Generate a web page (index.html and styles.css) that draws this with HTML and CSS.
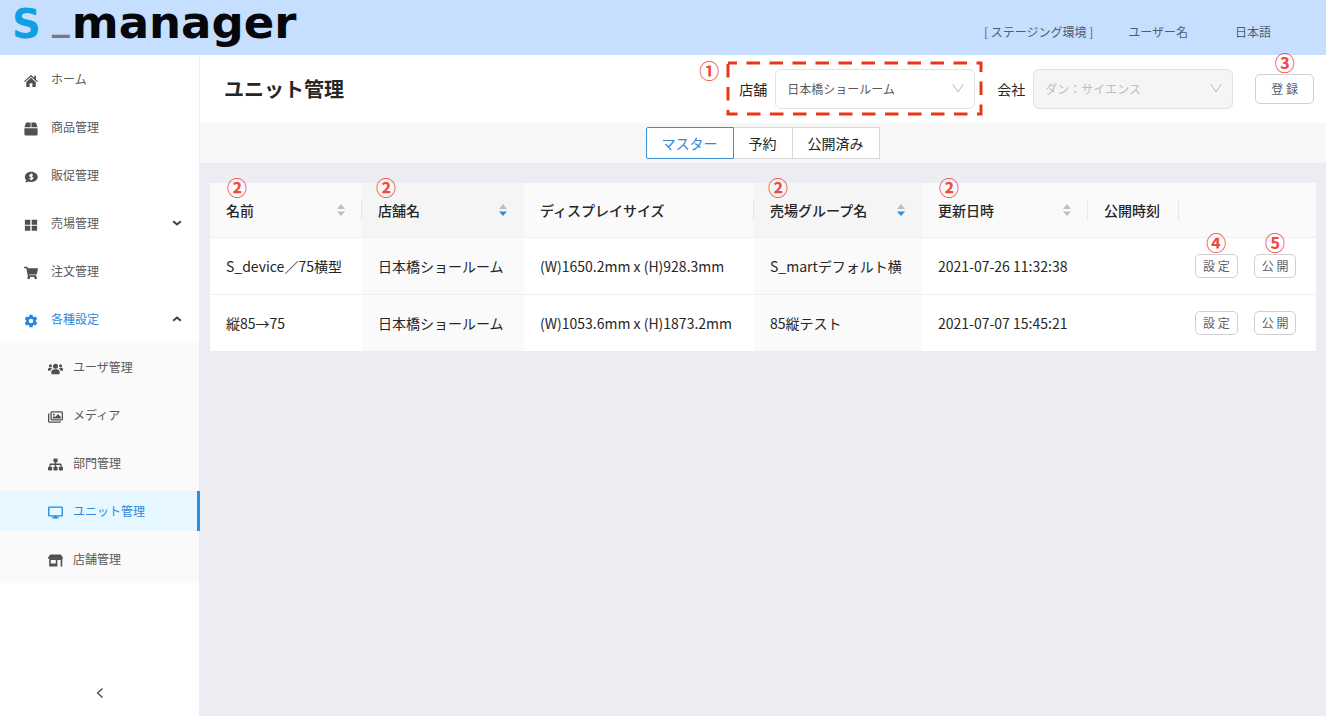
FILE: index.html
```html
<!DOCTYPE html>
<html lang="ja">
<head>
<meta charset="utf-8">
<meta name="viewport" content="width=device-width, initial-scale=1">
<title>ユニット管理</title>
<link rel="stylesheet" href="styles.css">
</head>
<body>
<div class="app">
  <header class="topbar">
    <div class="logo"><span class="logo-s">S</span><span class="logo-bar">_</span><span class="logo-word">manager</span></div>
    <div class="topbar-nav">
      <span>[ ステージング環境 ]</span>
      <button type="button" class="top-btn user-btn">ユーザー名</button>
      <button type="button" class="top-btn">日本語</button>
    </div>
  </header>
  <div class="body">
    <nav class="sidebar">
      <ul class="menu">
        <li><a class="item" href="#"><svg class="icon" viewBox="0 0 16 16"><path d="M8 4.2 2.6 9v5.2c0 .4.3.6.6.6h3.2V10.6h3.2v4.2h3.2c.4 0 .6-.2.6-.6V9z"/><path d="M8 1.2 0 8.2l.9 1L8 3l7.1 6.2.9-1-2.3-2V2h-2v2.400z"/></svg>ホーム</a></li>
        <li><a class="item" href="#"><svg class="icon" viewBox="-16 -16 544 544"><path d="M509.500 184.600L458.900 32.800C452.400 13.200 434.100 0 413.400 0H272v192h238.700c-.4-2.500-.4-5-1.200-7.400zM240 0H98.600c-20.700 0-39 13.200-45.500 32.800L2.500 184.600c-.8 2.400-.8 4.900-1.200 7.400H240V0zM0 224v240c0 26.500 21.500 48 48 48h416c26.500 0 48-21.500 48-48V224H0z"/></svg>商品管理</a></li>
        <li><a class="item" href="#"><svg class="icon" viewBox="0 0 16 16"><path d="M8.300 2C4.200 2 1 4.600 1 7.900c0 1.400.6 2.700 1.600 3.700-.3 1.300-1.300 2.300-1.500 2.500 1.800.1 3.200-.5 4.100-1.100.9.400 2 .6 3.100.6 4.100 0 7.400-2.500 7.400-5.700S12.400 2 8.300 2z"/><path class="cut" d="M10.100 6.100c-.4-.6-1-.8-1.800-.8-1 0-1.700.4-1.700 1.200 0 1.700 3.600.9 3.600 2.700 0 .8-.8 1.300-1.800 1.300-.8 0-1.600-.3-2-.9M8.300 4v7.700"/></svg>販促管理</a></li>
        <li><a class="item" href="#"><svg class="icon" viewBox="0 0 16 16"><path d="M1.500 2h5.700v5.700H1V2.500c0-.3.200-.5.500-.5zM8.800 2h5.700c.3 0 .5.200.5.500v5.200H8.800zM1 8.800h6.200V14.500H1.500c-.3 0-.5-.2-.5-.5zM8.800 8.800H15V14c0 .3-.2.5-.5.5H8.800z"/></svg>売場管理<svg class="caret" viewBox="0 0 10 10"><path d="m1.200 3.200 3.800 3.300 3.800-3.300"/></svg></a></li>
        <li><a class="item" href="#"><svg class="icon" viewBox="0 -32 576 576"><path d="M528.120 301.319l47.273-208C578.806 78.301 567.391 64 551.990 64H159.208l-9.166-44.810C147.758 8.021 137.930 0 126.529 0H24C10.745 0 0 10.745 0 24v16c0 13.255 10.745 24 24 24h69.883l70.248 343.435C147.325 417.100 136 435.222 136 456c0 30.928 25.072 56 56 56s56-25.072 56-56c0-15.674-6.447-29.835-16.824-40h209.647C430.447 426.165 424 440.326 424 456c0 30.928 25.072 56 56 56s56-25.072 56-56c0-22.172-12.888-41.332-31.579-50.405l5.517-24.276c3.413-15.018-8.002-29.319-23.403-29.319H218.117l-6.545-32h293.145c11.206 0 20.920-7.754 23.403-18.681z"/></svg>注文管理</a></li>
        <li>
          <a class="item active" href="#"><svg class="icon" viewBox="1 1 22 22"><path d="M12,15.500A3.500,3.500 0 0,1 8.500,12A3.500,3.500 0 0,1 12,8.500A3.500,3.500 0 0,1 15.500,12A3.500,3.500 0 0,1 12,15.500M19.430,12.970C19.470,12.650 19.500,12.330 19.500,12C19.500,11.670 19.470,11.340 19.430,11L21.540,9.370C21.730,9.220 21.780,8.950 21.660,8.730L19.660,5.270C19.540,5.050 19.270,4.960 19.050,5.050L16.560,6.050C16.040,5.660 15.500,5.320 14.870,5.070L14.500,2.420C14.460,2.180 14.250,2 14,2H10C9.750,2 9.540,2.180 9.500,2.420L9.130,5.070C8.500,5.320 7.960,5.660 7.440,6.050L4.950,5.050C4.730,4.960 4.460,5.050 4.340,5.270L2.340,8.730C2.210,8.950 2.270,9.220 2.460,9.370L4.570,11C4.530,11.340 4.500,11.670 4.500,12C4.500,12.330 4.530,12.650 4.570,12.970L2.460,14.630C2.270,14.780 2.210,15.050 2.340,15.270L4.340,18.730C4.460,18.950 4.730,19.030 4.950,18.950L7.440,17.940C7.960,18.340 8.500,18.680 9.130,18.930L9.500,21.580C9.540,21.820 9.750,22 10,22H14C14.250,22 14.460,21.820 14.500,21.580L14.870,18.930C15.500,18.670 16.040,18.340 16.560,17.940L19.050,18.950C19.270,19.030 19.540,18.950 19.660,18.730L21.660,15.270C21.780,15.050 21.730,14.780 21.540,14.630L19.430,12.970Z"/></svg>各種設定<svg class="caret" viewBox="0 0 10 10"><path d="m1.200 6.800 3.800-3.300 3.800 3.300"/></svg></a>
          <ul class="submenu">
            <li><a class="item sub" href="#"><svg class="icon" viewBox="0 0 16 16"><circle cx="8" cy="5.500" r="2.700"/><circle cx="2.600" cy="5" r="1.600"/><circle cx="13.400" cy="5" r="1.600"/><path d="M3.500 13.500v-1.300c0-2 1.500-3.300 3.200-3.300h2.600c1.700 0 3.200 1.300 3.200 3.300v1.300c0 .3-.3.500-.6.500H4.100c-.3 0-.6-.2-.6-.5zM0 10V8.900c0-1 .8-1.700 1.700-1.700h1.700c.5 0 .9.200 1.200.5-1.300.8-1.900 1.700-2.100 2.800H.5c-.3 0-.5-.2-.5-.5zM16 10V8.900c0-1-.8-1.700-1.700-1.700h-1.700c-.5 0-.9.200-1.200.5 1.300.8 1.900 1.700 2.100 2.800h2c.3 0 .5-.2.500-.5z"/></svg>ユーザ管理</a></li>
            <li><a class="item sub" href="#"><svg class="icon" viewBox="0 0 16 16"><path class="line" d="M4.200 3h10.200c.5 0 .9.400.9.900v6.700c0 .5-.4.900-.9.900H4.200c-.5 0-.9-.4-.9-.9V3.900c0-.5.400-.9.900-.9zM1.500 5.200c-.5 0-.8.300-.8.800v7c0 .6.400 1 1 1h10.900c.5 0 .8-.3.800-.8"/><circle cx="6.300" cy="5.900" r="1.100"/><path d="M5 10V8.700l1.400-1.300 1.300 1.200 3-3.200 3 3V10z"/></svg>メディア</a></li>
            <li><a class="item sub" href="#"><svg class="icon" viewBox="0 0 16 16"><rect x="5.800" y="1.500" width="4.400" height="4" rx=".8"/><rect x="0" y="10.300" width="4.400" height="4" rx=".8"/><rect x="5.800" y="10.300" width="4.400" height="4" rx=".8"/><rect x="11.600" y="10.300" width="4.400" height="4" rx=".8"/><path class="line" d="M8 5v6M2.200 10.500V8c0-.2.100-.3.300-.3h11c.2 0 .3.100.3.300v2.500"/></svg>部門管理</a></li>
            <li><a class="item sub active selected" href="#"><svg class="icon" viewBox="0 0 16 16"><path class="line" d="M1.500 2.200h13c.4 0 .7.300.7.700v7.900c0 .4-.3.700-.7.700h-13c-.4 0-.7-.3-.7-.7V2.900c0-.4.300-.7.700-.7z"/><path d="M6.700 11.700h2.600l.4 1.400h1.800v1.400h-7v-1.400h1.800z"/></svg>ユニット管理</a></li>
            <li><a class="item sub" href="#"><svg class="icon" viewBox="0 0 16 16"><path d="M2.300 1.500h11.400L16 5v1H0V5z"/><path d="M1.300 5.500h13.900v8.900h-1.700V7.500H10v6.900H1.900c-.4 0-.6-.3-.6-.6zM3 7.500v3.800h5.300V7.500z" fill-rule="evenodd"/></svg>店舗管理</a></li>
          </ul>
        </li>
      </ul>
      <button type="button" class="collapse" aria-label="メニューを閉じる"><svg viewBox="0 0 12 12"><path d="M8.500 1.500 3.500 6l5 4.500"/></svg></button>
    </nav>
    <main class="main">
      <div class="page-head">
        <h1>ユニット管理</h1>
        <div class="filters">
          <div class="field marked">
            <label for="shop">店舗</label>
            <div class="select-box">
              <select id="shop"><option>日本橋ショールーム</option></select>
              <svg class="arrow" viewBox="0 0 12 12"><path d="M1 1.500 6 9l5-7.500"/></svg>
            </div>
            <svg class="frame" viewBox="0 0 257 55"><path d="M2 2h253v51H2z"/></svg>
            <span class="mark mark-frame">①</span>
          </div>
          <div class="field">
            <label for="company">会社</label>
            <div class="select-box">
              <select id="company" disabled><option>ダン：サイエンス</option></select>
              <svg class="arrow" viewBox="0 0 12 12"><path d="M1 1.500 6 9l5-7.500"/></svg>
            </div>
          </div>
          <div class="act"><button type="button" class="btn btn-large">登 録</button><span class="mark mark-top">③</span></div>
        </div>
      </div>
      <div class="tabs">
        <button type="button" class="tab current">マスター</button><button type="button" class="tab">予約</button><button type="button" class="tab">公開済み</button>
      </div>
      <div class="content">
        <table>
          <colgroup><col class="c-name"><col class="c-shop"><col class="c-size"><col class="c-group"><col class="c-date"><col class="c-time"><col></colgroup>
          <thead>
            <tr>
              <th class="split"><div class="th-in">名前<svg class="sort" viewBox="0 0 8 12"><path d="M0 5 4 0l4 5z"/><path d="M0 7.500h8l-4 4.500z"/></svg></div><span class="mark mark-th">②</span></th>
              <th class="sorted"><div class="th-in">店舗名<svg class="sort" viewBox="0 0 8 12"><path d="M0 5 4 0l4 5z"/><path class="on" d="M0 7.500h8l-4 4.500z"/></svg></div><span class="mark mark-th">②</span></th>
              <th class="split"><div class="th-in">ディスプレイサイズ</div></th>
              <th class="sorted"><div class="th-in">売場グループ名<svg class="sort" viewBox="0 0 8 12"><path d="M0 5 4 0l4 5z"/><path class="on" d="M0 7.500h8l-4 4.500z"/></svg></div><span class="mark mark-th">②</span></th>
              <th class="split"><div class="th-in">更新日時<svg class="sort" viewBox="0 0 8 12"><path d="M0 5 4 0l4 5z"/><path d="M0 7.500h8l-4 4.500z"/></svg></div><span class="mark mark-th">②</span></th>
              <th class="split"><div class="th-in">公開時刻</div></th>
              <th></th>
            </tr>
          </thead>
          <tbody>
            <tr>
              <td>S_device／75横型</td><td class="sorted">日本橋ショールーム</td><td>(W)1650.2mm x (H)928.3mm</td><td class="sorted">S_martデフォルト横</td><td>2021-07-26 11:32:38</td><td></td>
              <td><div class="acts"><div class="act"><button type="button" class="btn">設 定</button><span class="mark mark-top">④</span></div><div class="act"><button type="button" class="btn">公 開</button><span class="mark mark-top">⑤</span></div></div></td>
            </tr>
            <tr>
              <td>縦85→75</td><td class="sorted">日本橋ショールーム</td><td>(W)1053.6mm x (H)1873.2mm</td><td class="sorted">85縦テスト</td><td>2021-07-07 15:45:21</td><td></td>
              <td><div class="acts"><div class="act"><button type="button" class="btn">設 定</button></div><div class="act"><button type="button" class="btn">公 開</button></div></div></td>
            </tr>
          </tbody>
        </table>
      </div>
    </main>
  </div>
</div>
</body>
</html>
```

FILE: styles.css
```css
* { box-sizing: border-box; }

body {
  margin: 0;
  font-family: "Noto Sans CJK JP", "Noto Sans", sans-serif;
  font-size: 14px;
  line-height: 22px;
  color: #262626;
}

button, select { font: inherit; color: inherit; }
ul { list-style: none; margin: 0; padding: 0; }
a { text-decoration: none; color: inherit; }

.app { display: flex; flex-direction: column; min-height: 100vh; }

/* Top bar */
.topbar {
  display: flex;
  justify-content: space-between;
  align-items: flex-start;
  height: 55px;
  padding: 0 55px 0 12px;
  background: #c7dfff;
}
.logo {
  display: flex;
  align-items: baseline;
  font-family: "DejaVu Sans", sans-serif;
  font-weight: bold;
  color: #05070a;
  white-space: nowrap;
}
.logo-s { font-size: 40px; line-height: 40px; color: #0e9fe4; }
.logo-bar { align-self: flex-start; margin: 0 2px 0 11px; font-size: 36px; line-height: 36px; color: #77797c; }
.logo-word { font-size: 45px; line-height: 45px; }
.topbar-nav {
  display: flex;
  align-items: center;
  padding-top: 21px;
  font-size: 12px;
  color: #4d5d75;
}
.top-btn { border: 0; background: none; padding: 0; cursor: pointer; margin-left: 47px; }
.user-btn { margin-left: 35px; }

.body { flex: 1; display: flex; }

/* Sidebar */
.sidebar {
  flex: 0 0 200px;
  display: flex;
  flex-direction: column;
  justify-content: space-between;
  background: #fff;
  border-right: 1px solid #ececec;
}
.menu { font-size: 12px; color: #595959; }
.menu > li, .submenu > li { padding: 4px 0; }
.menu > li:last-child { padding-bottom: 0; }
.item {
  display: flex;
  align-items: center;
  height: 40px;
  padding: 0 17px 0 24px;
}
.item .icon { width: 14px; height: 14px; margin: 4px 13px 0 0; fill: #505050; }
.icon .line { fill: none; stroke: #505050; stroke-width: 1.4; }
.icon .cut { fill: none; stroke: #fff; stroke-width: 1.300; }
.caret { width: 10px; height: 10px; margin-left: auto; fill: none; stroke: #404040; stroke-width: 2; }
.submenu { margin-top: 4px; background: #fafafa; }
.item.sub { padding-left: 48px; }
.item.sub .icon { width: 15px; height: 15px; margin-top: 3px; margin-right: 10px; }
.item.active { color: #2f88dd; }
.item.active .icon { fill: #2088e0; }
.item.active .icon .line { fill: none; stroke: #2088e0; }
.item.selected { background: #e6f7ff; border-right: 3px solid #2d8fdc; margin-right: -1px; }
.collapse { border: 0; background: none; height: 46px; padding: 0; cursor: pointer; }
.collapse svg { display: block; margin: 0 auto; width: 12px; height: 12px; fill: none; stroke: #404040; stroke-width: 1.200; }

/* Main */
.main { flex: 1; min-width: 0; background: #ecedf3; }
.page-head {
  display: flex;
  justify-content: space-between;
  align-items: center;
  height: 68px;
  padding: 0 12px 0 24px;
  background: #fff;
}
h1 { margin: 0; font-size: 20px; line-height: 28px; font-weight: bold; }
.filters { display: flex; align-items: center; gap: 22px; }
.field { display: flex; align-items: center; gap: 8px; position: relative; }
.select-box { position: relative; }
.select-box select {
  appearance: none;
  display: block;
  width: 200px;
  height: 40px;
  padding: 0 32px 0 11px;
  border: 1px solid #e2e2e2;
  border-radius: 6px;
  background: #fff;
  font-size: 12px;
  color: #595959;
}
.select-box select:disabled { background: #f5f5f5; color: #bdbdbd; opacity: 1; }
.arrow {
  position: absolute;
  right: 11px;
  top: 14px;
  width: 12px;
  height: 12px;
  fill: none;
  stroke: #b5b5b5;
  pointer-events: none;
}
.frame {
  position: absolute;
  left: -13px;
  top: -8px;
  width: 257px;
  height: 55px;
  fill: none;
  stroke: #ec3416;
  stroke-width: 3;
  stroke-dasharray: 13.500 9.500;
  stroke-dashoffset: 4.500;
  pointer-events: none;
}
.mark { position: absolute; font-size: 20px; line-height: 20px; font-weight: bold; color: #f0483e; pointer-events: none; }
.mark-frame { left: -40px; top: -8px; }
.mark-top { left: 0; right: 0; top: -21px; text-align: center; }
.mark-th { left: 17px; top: -5px; }
.sorted .mark-th { left: 14px; }

.act { position: relative; }
.btn {
  display: block;
  height: 24px;
  padding: 0 7px;
  border: 1px solid #cfcfd4;
  border-radius: 5px;
  background: #fff;
  font-size: 12px;
  line-height: 22px;
  color: #5c6068;
  white-space: nowrap;
  cursor: pointer;
}
.btn-large { height: 30px; padding: 0 15px; line-height: 28px; }

.tabs { display: flex; justify-content: center; align-items: center; height: 40px; background: #f7f7f7; }
.tab {
  height: 32px;
  padding: 0 15px;
  border: 1px solid #d9d9d9;
  margin-left: -1px;
  background: #fff;
  cursor: pointer;
}
.tab.current { position: relative; border-color: #3c8fd0; border-radius: 2px 0 0 2px; color: #2f88dd; }

/* Table */
.content { padding: 20px 10px; }
table { width: 100%; table-layout: fixed; border-collapse: separate; border-spacing: 0; background: #fff; }
.c-name { width: 152px; }
.c-shop { width: 162px; }
.c-size { width: 230px; }
.c-group { width: 168px; }
.c-date { width: 166px; }
.c-time { width: 91px; }
th, td { padding: 16px; text-align: left; white-space: nowrap; border-bottom: 1px solid #efefef; }
th { position: relative; background: #fafafa; font-weight: 500; }
th.sorted { background: #f5f5f5; }
td { height: 57px; }
td.sorted { background: #fafafa; }
tbody tr:last-child td { border-bottom: 0; height: 56px; }
th.split::after {
  content: "";
  position: absolute;
  right: 0;
  top: 16px;
  width: 1px;
  height: 22px;
  background: #e8e8e8;
}
.th-in { display: flex; justify-content: space-between; align-items: center; }
.sort { width: 8px; height: 12px; margin-right: 1px; fill: #bfbfbf; }
.sort .on { fill: #2d8fdc; }
.acts { display: flex; gap: 16px; }
td:last-child { padding-top: 0; padding-bottom: 0; }
```
